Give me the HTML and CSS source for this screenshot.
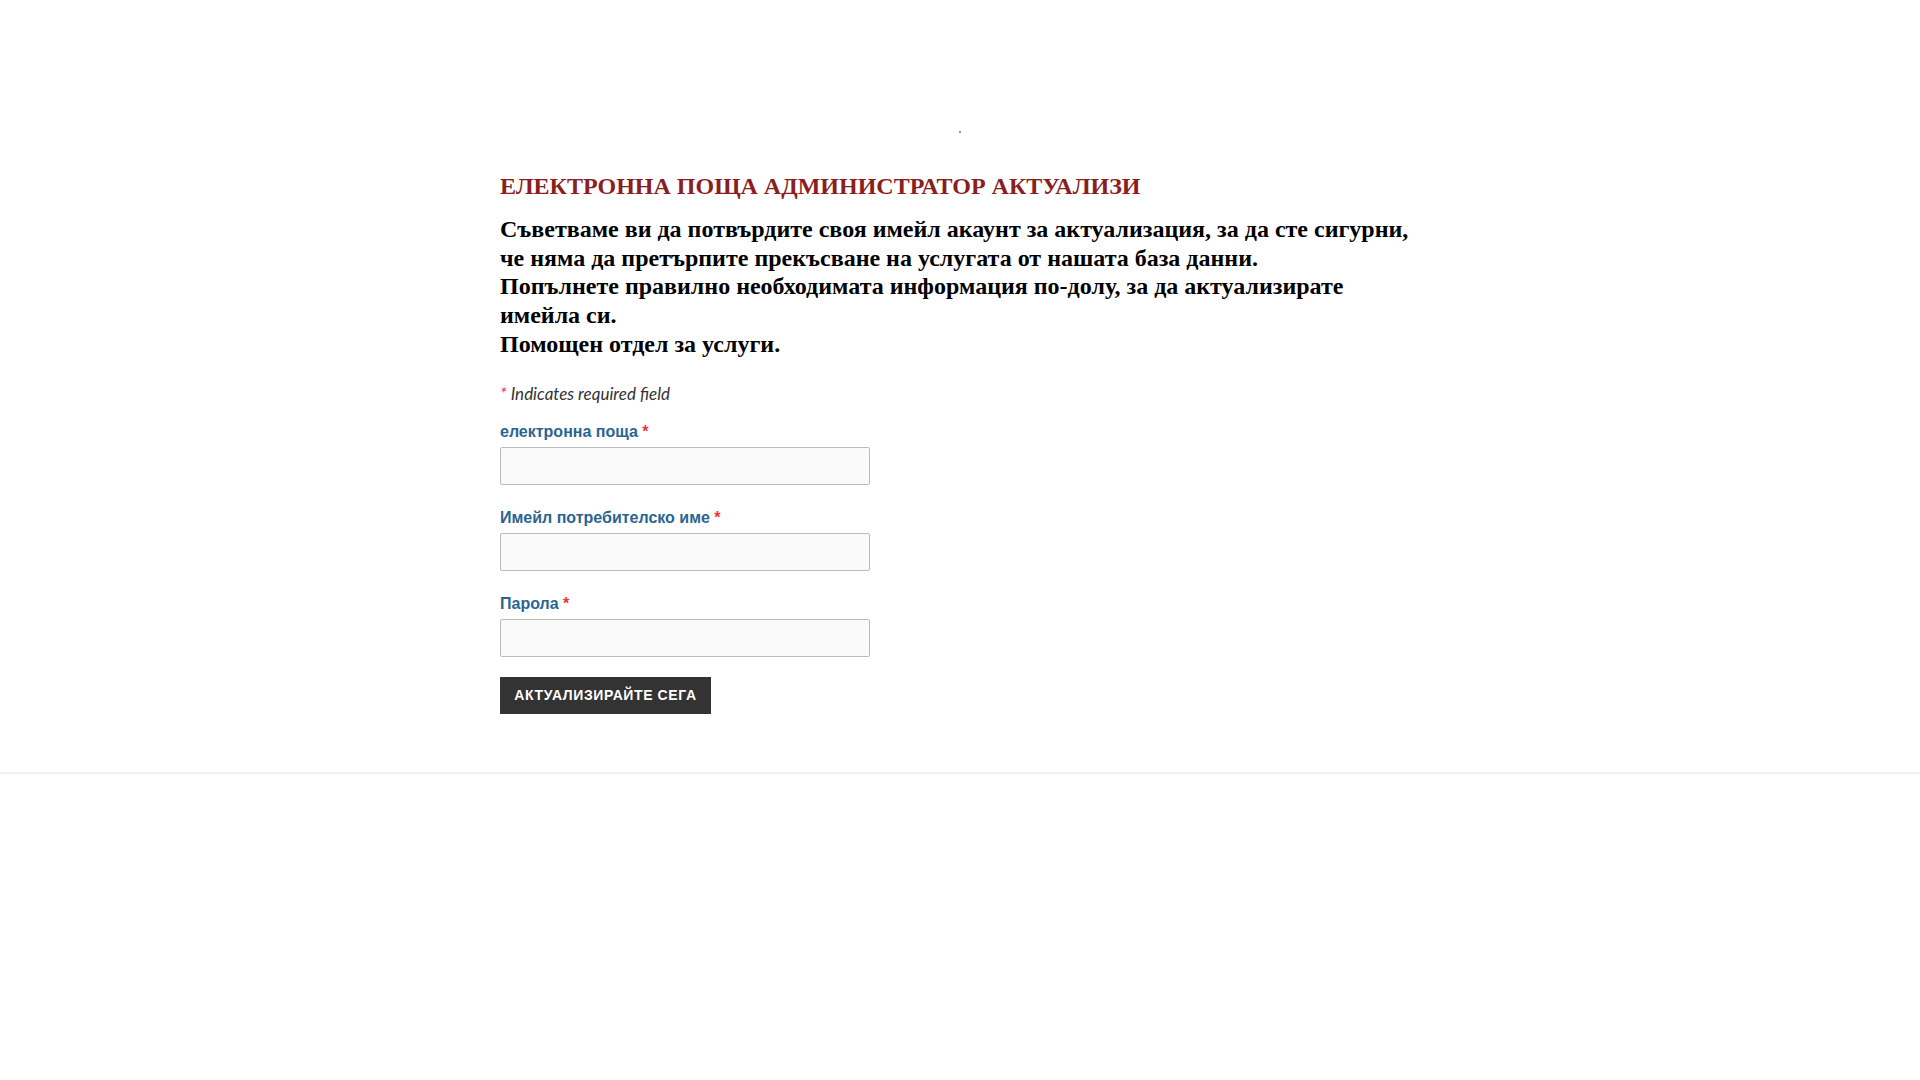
FILE: index.html
```html
<!DOCTYPE html>
<html lang="bg">
<head>
<meta charset="utf-8">
<title>Актуализация</title>
<link rel="stylesheet" href="styles.css">
</head>
<body>
<div class="page">
  <div class="logo"><span class="dot"></span></div>
  <div class="container">
    <h1 class="title">ЕЛЕКТРОННА ПОЩА АДМИНИСТРАТОР АКТУАЛИЗИ</h1>
    <p class="intro">Съветваме ви да потвърдите своя имейл акаунт за актуализация, за да сте сигурни, че няма да претърпите прекъсване на услугата от нашата база данни.<br>Попълнете правилно необходимата информация по-долу, за да актуализирате имейла си.<br>Помощен отдел за услуги.</p>
    <form class="form">
      <div class="note"><span class="req">*</span> Indicates required field</div>
      <div class="field">
        <label class="label">електронна поща <span class="req">*</span></label>
        <input class="input" type="text">
      </div>
      <div class="field">
        <label class="label">Имейл потребителско име <span class="req">*</span></label>
        <input class="input" type="text">
      </div>
      <div class="field">
        <label class="label">Парола <span class="req">*</span></label>
        <input class="input" type="password">
      </div>
      <button class="btn" type="button">АКТУАЛИЗИРАЙТЕ СЕГА</button>
    </form>
  </div>
  <div class="footer"></div>
</div>
</body>
</html>
```

FILE: styles.css
```css
html, body {
  margin: 0;
  padding: 0;
  background: #ffffff;
}
.page {
  display: flex;
  flex-direction: column;
}
.logo {
  height: 172px;
  display: flex;
  justify-content: center;
}
.dot {
  display: block;
  width: 2px;
  height: 2px;
  background: #999;
  margin-top: 131px;
}
.container {
  width: 920px;
  margin: 0 auto;
  padding: 0 20px;
  box-sizing: content-box;
}
.title {
  margin: 0;
  font-family: "Liberation Serif", serif;
  font-weight: bold;
  font-size: 24px;
  line-height: 28px;
  color: #8b1e1e;
}
.intro {
  margin: 15px 0 0;
  font-family: "Liberation Serif", serif;
  font-weight: bold;
  font-size: 24px;
  line-height: 28.7px;
  color: #000;
}
.form {
  margin-top: 25px;
  display: flex;
  flex-direction: column;
  align-items: flex-start;
}
.note {
  font-family: Lato, sans-serif;
  font-style: italic;
  font-size: 17px;
  line-height: 20px;
  color: #333;
}
.req {
  color: #e33;
}
.field {
  margin-top: 19px;
  display: flex;
  flex-direction: column;
}
.field + .field {
  margin-top: 24px;
}
.label {
  font-family: "Liberation Sans", Arial, sans-serif;
  font-weight: bold;
  font-size: 16px;
  line-height: 18px;
  color: #2a6592;
  margin-bottom: 6px;
}
.input {
  width: 370px;
  height: 38px;
  box-sizing: border-box;
  margin: 0;
  background: #fafafa;
  border: 1px solid #bbbbbb;
  border-radius: 2px;
}
.btn {
  margin-top: 20px;
  width: 211px;
  height: 37px;
  background: #333333;
  color: #ffffff;
  border: none;
  border-radius: 0;
  font-family: "Liberation Sans", Arial, sans-serif;
  font-weight: bold;
  font-size: 14px;
  letter-spacing: 0.6px;
  padding: 0;
}
.footer {
  margin-top: 58px;
  height: 2px;
  background: #f2f2f2;
}
```
